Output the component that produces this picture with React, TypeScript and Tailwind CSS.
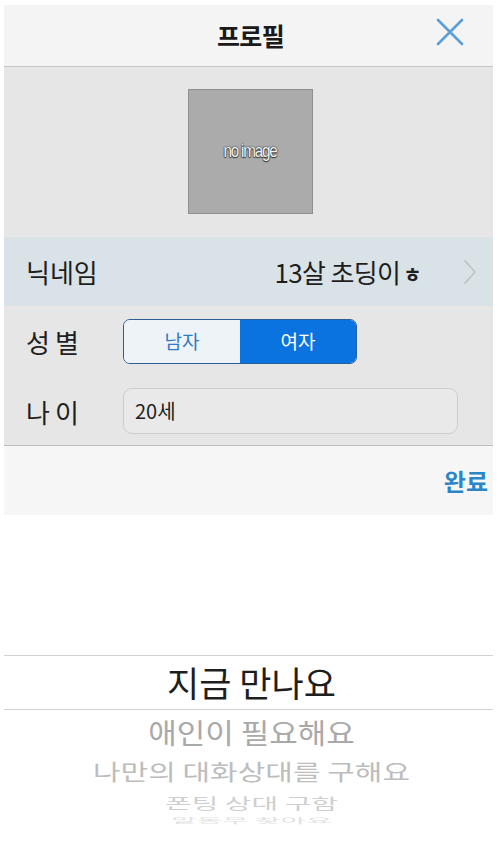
const KR = { fontFamily: '"Noto Sans CJK KR", "Noto Sans", sans-serif' };

// iOS-style picker wheel rows below the fold
const WHEEL_BELOW = [
  { text: '애인이 필요해요', cls: 'text-[31px] text-[#a9a9a9] h-[42px] scale-y-[0.9]' },
  { text: '나만의 대화상대를 구해요', cls: 'text-[30px] text-[#bdbdbd] h-[38px] scale-y-[0.72]' },
  { text: '폰팅 상대 구함', cls: 'text-[29px] text-[#cfcfcf] h-[24px] scale-y-[0.5]' },
  { text: '말동무 찾아요', cls: 'text-[28px] text-[#e2e2e2] h-[12px] scale-y-[0.25]' },
];

export default function App() {
  return (
    <div className="w-[500px] h-[844px] bg-white overflow-hidden" style={KR}>
      <div className="ml-[4px] w-[489px] pt-[5px]">
        {/* Header */}
        <div className="relative h-[62px] bg-[#f4f4f4] border-b border-[#c6c6c6] flex items-center justify-center pl-[4px]">
          <h1 className="text-[25px] font-bold text-[#1a1a1a] tracking-tight">프로필</h1>
          <button className="absolute right-[28px] top-[12px] w-[30px] h-[30px] flex items-center justify-center">
            <svg viewBox="0 0 30 30" className="w-[30px] h-[30px]">
              <path d="M3 3 L27 27 M27 3 L3 27" stroke="#5b9fd6" strokeWidth="2.6" strokeLinecap="round" />
            </svg>
          </button>
        </div>

        {/* Photo */}
        <div className="bg-[#e6e6e6] pt-[22px] pb-[23px] pl-[4px] flex justify-center">
          <div className="w-[125px] h-[125px] bg-[#ababab] border border-[#8f8f8f] flex items-center justify-center">
            <span
              className="text-[19px] text-[#f4f4f4] tracking-[-0.08em] scale-x-[0.8]"
              style={{ fontFamily: '"Liberation Sans", sans-serif', textShadow: '0 0 2px #333, 0 0 1px #222, 0 1px 1px #333' }}
            >
              no image
            </span>
          </div>
        </div>

        {/* Nickname */}
        <div className="h-[69px] bg-[#d9e2e6] flex items-center pl-[22px] pr-[16px]">
          <span className="text-[26px] text-[#1e1e1e]">닉네임</span>
          <span className="ml-auto text-[26px] text-[#1e1e1e] tracking-tight">
            13살 초딩이<span className="text-[20px] font-bold ml-[3px]">ㅎ</span>
          </span>
          <svg viewBox="0 0 14 26" className="ml-[42px] w-[14px] h-[26px]">
            <path d="M2 2 L12 13 L2 24" fill="none" stroke="#c2c2c2" strokeWidth="1.8" strokeLinecap="round" strokeLinejoin="round" />
          </svg>
        </div>

        {/* Gender */}
        <div className="bg-[#e6e6e6]">
          <div className="h-[71px] flex items-center pl-[22px]">
            <span className="w-[97px] text-[26px] text-[#1e1e1e] tracking-[0.2em]">성별</span>
            <div className="flex w-[234px] h-[45px] rounded-[7px] border border-[#2a5f95] overflow-hidden">
              <div className="flex-1 bg-[#eef3f7] flex items-center justify-center text-[19px] text-[#2f7cc2]">남자</div>
              <div className="flex-1 bg-[#0a73df] flex items-center justify-center text-[19px] text-white">여자</div>
            </div>
          </div>

          {/* Age */}
          <div className="h-[69px] flex items-center pl-[22px] border-b border-[#bdbdbd]">
            <span className="w-[97px] text-[26px] text-[#1e1e1e] tracking-[0.2em]">나이</span>
            <div className="w-[335px] h-[46px] rounded-[9px] border border-[#cdcdcd] bg-[#e9e9e9] flex items-center px-[11px]">
              <span className="text-[20px] text-[#1e1e1e]">20세</span>
            </div>
          </div>
        </div>

        {/* Toolbar */}
        <div className="h-[69px] bg-[#f6f6f6] flex items-center justify-end pr-[5px]">
          <span className="text-[24px] font-bold text-[#2a86c8]">완료</span>
        </div>

        {/* Picker */}
        <div className="mt-[140px]">
          <div className="h-[55px] border-y border-[#d2d2d2] flex items-center justify-center pl-[6px]">
            <span className="text-[35px] text-[#1e1e1e]">지금 만나요</span>
          </div>
          {WHEEL_BELOW.map(row => (
            <div key={row.text} className={`flex items-center justify-center leading-none pl-[6px] ${row.cls}`}>
              {row.text}
            </div>
          ))}
        </div>
      </div>
    </div>
  );
}
